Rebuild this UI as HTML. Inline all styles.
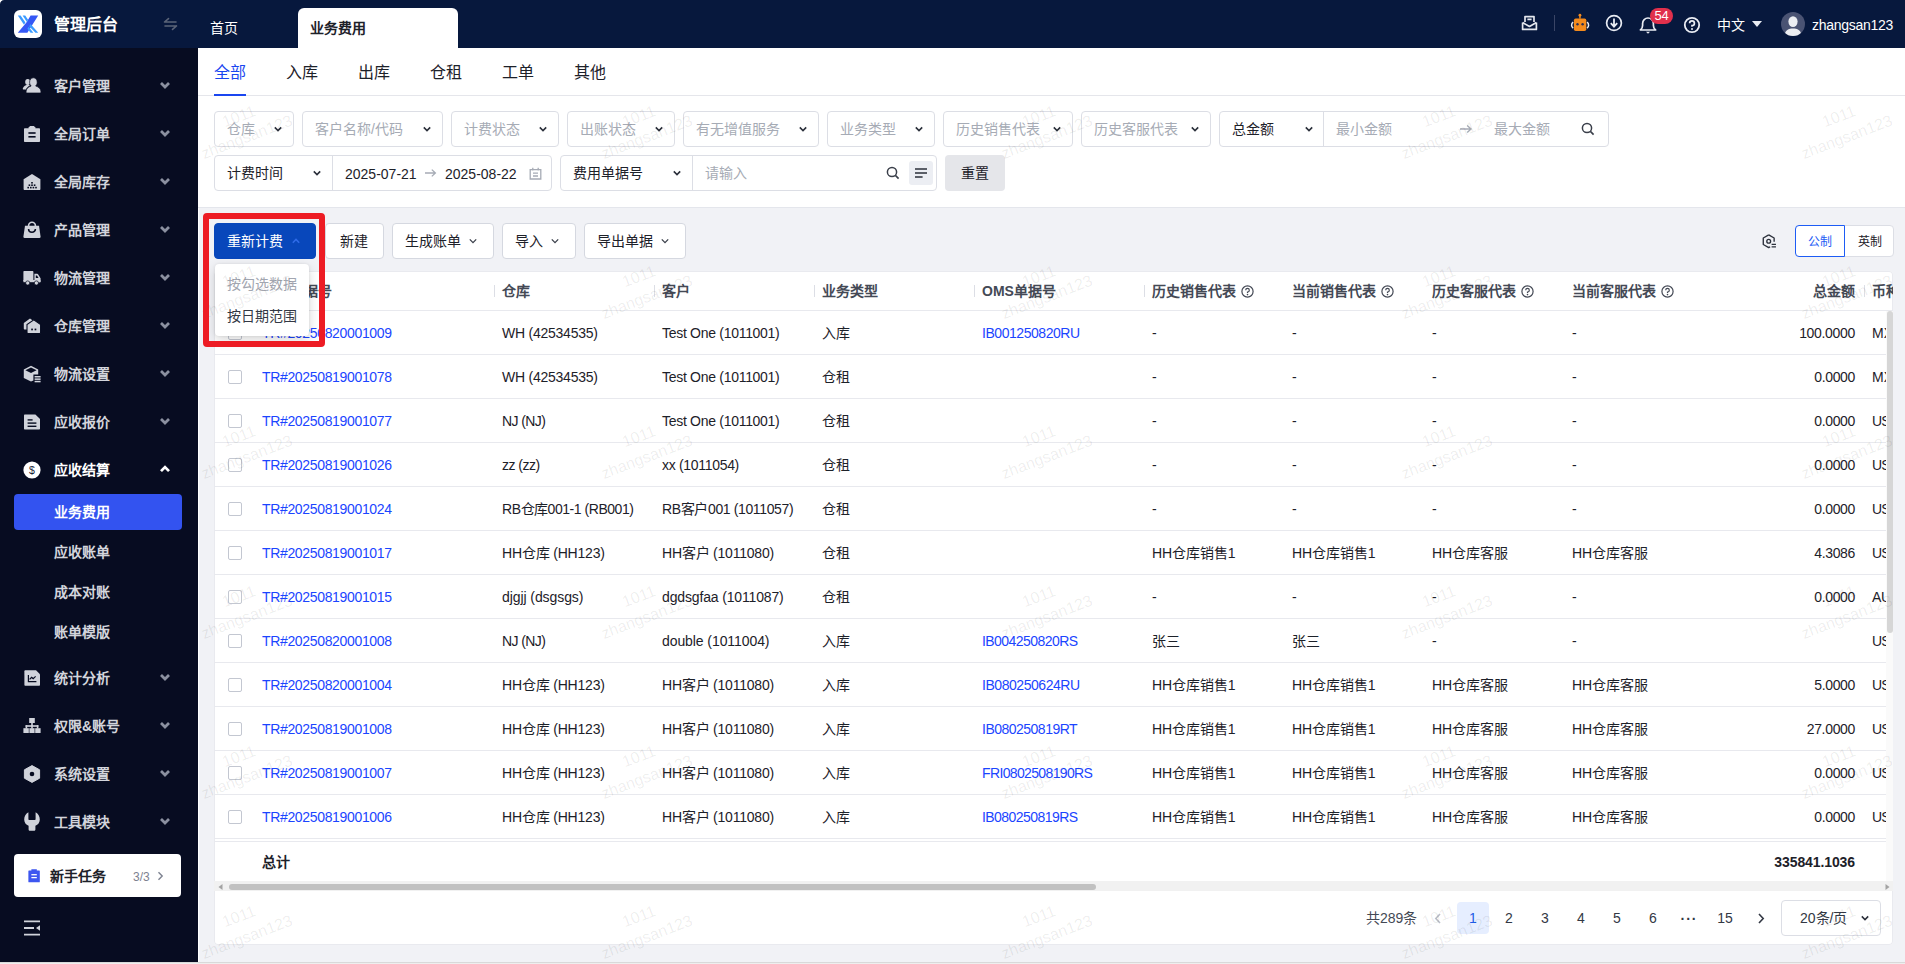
<!DOCTYPE html>
<html lang="zh-CN">
<head>
<meta charset="utf-8">
<title>业务费用</title>
<style>
*{box-sizing:border-box;margin:0;padding:0}
html,body{width:1905px;height:964px;overflow:hidden}
body{font-family:"Liberation Sans",sans-serif;font-size:14px;color:#1d2129;background:#f1f2f6;position:relative}
.abs{position:absolute}
svg{display:block}
#top{position:absolute;left:0;top:0;width:1905px;height:48px;background:#07183d}
#side{position:absolute;left:0;top:48px;width:198px;height:914px;background:#070c21}
#logo{position:absolute;left:14px;top:10px;width:28px;height:28px;border-radius:6px;background:#fff}
#brand{position:absolute;left:54px;top:13px;font-size:16px;font-weight:bold;color:#fff;line-height:24px;white-space:nowrap}
.t{position:absolute;white-space:nowrap;line-height:20px}
.mi{position:absolute;left:0;width:198px;height:40px}
.mi .ic{position:absolute;left:23px;top:12px;width:18px;height:18px;overflow:visible}
.mi .tx{position:absolute;left:54px;top:11px;line-height:20px;font-size:14px;font-weight:bold;color:#d3d5dc;white-space:nowrap}
.mi .cv{position:absolute;left:160px;top:15px;width:10px;height:10px}
.sub{position:absolute;left:54px;line-height:20px;font-size:14px;font-weight:bold;color:#d3d5dc;white-space:nowrap}
#subtabs{position:absolute;left:198px;top:48px;width:1707px;height:49px;background:#fff}
.st{position:absolute;top:14px;font-size:16px;line-height:22px;color:#1d2129;white-space:nowrap}
#filters{position:absolute;left:198px;top:97px;width:1707px;height:111px;background:#fff;border-bottom:1px solid #e4e6ec}
.sel{position:absolute;height:36px;border:1px solid #dcdee5;border-radius:4px;background:#fff}
.sel .ph{position:absolute;left:12px;top:7px;line-height:20px;color:#a6abb5;white-space:nowrap}
.sel .vl{position:absolute;left:12px;top:7px;line-height:20px;color:#1d2129;white-space:nowrap}
.sel .cv{position:absolute;right:11px;top:13px;width:8px;height:8px}
.btn{position:absolute;height:36px;border:1px solid #d5d8e0;border-radius:4px;background:#fff;top:223px;line-height:34px;white-space:nowrap;color:#1d2129;padding-left:12px}
.btn .cv{position:absolute;right:16px;top:13px;width:8px;height:8px}
#card{position:absolute;left:214px;top:271px;width:1679px;height:674px;background:#fff;border-radius:4px;overflow:hidden;box-shadow:inset 0 0 0 1px #e9eaef}
#card .h{position:absolute;top:10px;line-height:20px;font-weight:bold;color:#444955;white-space:nowrap}
#card .sp{position:absolute;top:14px;width:1px;height:12px;background:#dcdee5}
.r{position:absolute;left:0;width:1672px;height:44px;border-bottom:1px solid #e8e9ee;overflow:hidden}
.r div{position:absolute;top:12px;line-height:20px;white-space:nowrap;color:#1d2129}
.r .a{color:#1b45ff}
.r .cb{left:14px;top:15px;width:14px;height:14px;border:1px solid #c3c7d1;border-radius:2px;background:#fff}
.r .am{left:1441px;width:200px;text-align:right}
.w{position:absolute;width:120px;height:44px;line-height:22px;font-size:16px;text-align:center;color:rgba(0,0,0,.075);transform:rotate(-21deg);white-space:nowrap}
</style>
</head>
<body>
<div id="top">
<div id="logo"><svg width="28" height="28" viewBox="0 0 28 28"><path d="M3.8 22.8 L13.4 22.8 L24.2 5.6 L16.6 5.6 L12.6 12.2 Z" fill="#3558f5"/><path d="M3.8 5.6 L6.6 5.6 L11.4 12.6 L10 14.8 Z" fill="#3a9bff"/><path d="M8.6 5.6 L11.2 5.6 L14.2 10 L12.9 12 Z" fill="#3a9bff"/><path d="M15.2 16.2 L16.6 14 L24.2 22.8 L21.4 22.8 Z" fill="#3a9bff"/><path d="M13.4 18.8 L14.6 16.8 L19.4 22.8 L16.6 22.8 Z" fill="#3a9bff"/></svg></div>
<div id="brand">管理后台</div>
<svg class="abs" style="left:163px;top:17px" width="15" height="14" viewBox="0 0 15 14"><path d="M1.5 5 H13 M1.5 5 L5.5 1.6 M13.5 9 H2 M13.5 9 L9.5 12.4" fill="none" stroke="#5b6478" stroke-width="1.6" stroke-linecap="round"/></svg>
<div class="t" style="left:210px;top:18px;color:#fff">首页</div>
<div class="abs" style="left:298px;top:8px;width:160px;height:40px;background:#fff;border-radius:6px 6px 0 0"></div>
<div class="t" style="left:310px;top:18px;color:#1d2129;font-weight:bold">业务费用</div>
<svg class="abs" style="left:1521px;top:15px" width="17" height="16" viewBox="0 0 17 16"><path d="M4 7 V1.6 H13 V7 M1.6 7.4 V14.4 H15.4 V7.4 M1.6 7.6 L8.5 11.4 L15.4 7.6 M6.4 4.4 H10.6" fill="none" stroke="#e4e7ee" stroke-width="1.7" stroke-linejoin="round"/></svg>
<div class="abs" style="left:1554px;top:15px;width:1px;height:16px;background:#3a4566"></div>
<svg class="abs" style="left:1570px;top:13px" width="20" height="19" viewBox="0 0 20 19"><rect x="9.2" y="1.6" width="1.5" height="4" fill="#f38a1d"/><circle cx="9.95" cy="2.2" r="1.4" fill="#f38a1d"/><rect x="3.9" y="5.4" width="12.4" height="12.6" rx="1.8" fill="#f38a1d"/><path d="M3.2 9.2 A3.6 3.6 0 0 0 3.2 15.2 M17 9.2 A3.6 3.6 0 0 1 17 15.2" fill="none" stroke="#e9ecf3" stroke-width="1.5"/><circle cx="7.5" cy="11.2" r="1.2" fill="#2a2f55"/><circle cx="12.6" cy="11.2" r="1.2" fill="#2a2f55"/></svg>
<svg class="abs" style="left:1605px;top:14px" width="18" height="18" viewBox="0 0 18 18"><circle cx="9" cy="9" r="7.4" fill="none" stroke="#e9ecf3" stroke-width="1.7"/><path d="M9 4.6 V12 M5.8 9.2 L9 12.6 L12.2 9.2" fill="none" stroke="#e9ecf3" stroke-width="1.8"/></svg>
<svg class="abs" style="left:1638px;top:15px" width="20" height="20" viewBox="0 0 20 20"><path d="M2.4 15 H17.6 C16 13.6 15.4 12.4 15.4 10.4 V8.4 A5.4 5.4 0 0 0 4.6 8.4 V10.4 C4.6 12.4 4 13.6 2.4 15 Z" fill="none" stroke="#e9ecf3" stroke-width="1.7" stroke-linejoin="round"/><path d="M8 16.8 H12 L10 18.8 Z" fill="#e9ecf3"/></svg>
<div class="abs" style="left:1650px;top:8px;width:23px;height:16px;border-radius:8px;background:#e1304c;color:#fff;font-size:13px;line-height:16px;text-align:center;letter-spacing:-0.3px">54</div>
<svg class="abs" style="left:1683px;top:16px" width="18" height="18" viewBox="0 0 18 18"><circle cx="9" cy="9" r="7.2" fill="none" stroke="#e9ecf3" stroke-width="1.8"/><path d="M6.6 7.2 A2.4 2.4 0 1 1 9 9.6 V10.8" fill="none" stroke="#e9ecf3" stroke-width="1.7"/><circle cx="9" cy="13" r="1" fill="#e9ecf3"/></svg>
<div class="t" style="left:1717px;top:15px;color:#fff">中文</div>
<svg class="abs" style="left:1752px;top:21px" width="10" height="6" viewBox="0 0 10 6"><path d="M0 0 H10 L5 6 Z" fill="#e9ecf3"/></svg>
<div class="abs" style="left:1781px;top:12px;width:24px;height:24px;border-radius:12px;background:#4a5373;overflow:hidden"><svg width="24" height="24" viewBox="0 0 24 24"><ellipse cx="12" cy="9.6" rx="4.6" ry="5.4" fill="#eceef2"/><path d="M3.6 24 C3.6 17.6 8 16.4 12 16.4 C16 16.4 20.4 17.6 20.4 24 Z" fill="#eceef2"/></svg></div>
<div class="t" style="left:1812px;top:15px;color:#fff;letter-spacing:-0.27px;">zhangsan123</div>
</div>
<div id="side">
<div class="mi" style="top:17px"><svg class="ic" viewBox="0 0 18 18"><ellipse cx="4.7" cy="5" rx="2.5" ry="3" fill="#d0d3db"/><path d="M-0.2 11.4 C0.4 9.2 2.6 8 5.6 7.8 L7 8.6 C5 9.6 3.6 10.8 3 12.6 H0.6 C0 12.6 -0.4 12 -0.2 11.4 Z" fill="#d0d3db"/><path d="M10.4 0.8 C8 0.8 6.6 2.8 6.6 5.2 C6.6 6.8 7.2 8.2 8.2 9 C5.2 9.8 3 11.8 3 15 C3 15.6 3.4 16 4 16 H17 C17.6 16 18 15.6 18 15 C18 11.8 15.6 9.8 12.6 9 C13.6 8.2 14.2 6.8 14.2 5.2 C14.2 2.8 12.8 0.8 10.4 0.8 Z" fill="#d0d3db" stroke="#070c21" stroke-width=".7"/></svg><div class="tx" style="">客户管理</div><svg class="cv" viewBox="0 0 8 8"><path d="M0.8 2.4 L4 5.6 L7.2 2.4" fill="none" stroke="#8b90a0" stroke-width="2.2"/></svg></div>
<div class="mi" style="top:65px"><svg class="ic" viewBox="0 0 18 18"><path d="M2 3.2 H5.6 V2 H12.4 V3.2 H16 C16.6 3.2 17 3.6 17 4.2 V16 C17 16.6 16.6 17 16 17 H2 C1.4 17 1 16.6 1 16 V4.2 C1 3.6 1.4 3.2 2 3.2 Z" fill="#d0d3db"/><rect x="5.4" y="7.2" width="7.2" height="1.6" fill="#070c21"/><rect x="5.4" y="11" width="7.2" height="1.6" fill="#070c21"/><rect x="6.6" y="1" width="4.8" height="2.6" rx=".6" fill="#d0d3db"/></svg><div class="tx" style="">全局订单</div><svg class="cv" viewBox="0 0 8 8"><path d="M0.8 2.4 L4 5.6 L7.2 2.4" fill="none" stroke="#8b90a0" stroke-width="2.2"/></svg></div>
<div class="mi" style="top:113px"><svg class="ic" viewBox="0 0 18 18"><path d="M9 1 L17.4 6.2 V16 C17.4 16.6 17 17 16.4 17 H1.6 C1 17 0.6 16.6 0.6 16 V6.2 Z" fill="#d0d3db"/><g fill="#070c21"><rect x="8.2" y="9" width="1.6" height="1.6"/><rect x="5.6" y="11.4" width="1.6" height="1.6"/><rect x="8.2" y="11.4" width="1.6" height="1.6"/><rect x="10.8" y="11.4" width="1.6" height="1.6"/><rect x="4.4" y="13.8" width="1.6" height="1.6"/><rect x="7" y="13.8" width="1.6" height="1.6"/><rect x="9.6" y="13.8" width="1.6" height="1.6"/><rect x="12.2" y="13.8" width="1.6" height="1.6"/></g></svg><div class="tx" style="">全局库存</div><svg class="cv" viewBox="0 0 8 8"><path d="M0.8 2.4 L4 5.6 L7.2 2.4" fill="none" stroke="#8b90a0" stroke-width="2.2"/></svg></div>
<div class="mi" style="top:161px"><svg class="ic" viewBox="0 0 18 18"><path d="M5.6 6 V4.6 A3.4 3.4 0 0 1 12.4 4.6 V6" fill="none" stroke="#d0d3db" stroke-width="1.6"/><path d="M2 4.8 H16 L17.6 15.8 C17.7 16.5 17.2 17 16.6 17 H1.4 C0.8 17 0.3 16.5 0.4 15.8 Z" fill="#d0d3db"/><path d="M5.6 8 C5.6 12.4 12.4 12.4 12.4 8" fill="none" stroke="#070c21" stroke-width="1.6"/></svg><div class="tx" style="">产品管理</div><svg class="cv" viewBox="0 0 8 8"><path d="M0.8 2.4 L4 5.6 L7.2 2.4" fill="none" stroke="#8b90a0" stroke-width="2.2"/></svg></div>
<div class="mi" style="top:209px"><svg class="ic" viewBox="0 0 18 18"><path d="M1.2 2 H9.4 C10 2 10.4 2.4 10.4 3 V12 H0.4 V2.8 C0.4 2.4 0.8 2 1.2 2 Z" fill="#d0d3db"/><path d="M11.4 4.8 H14.2 C14.6 4.8 15 5 15.2 5.4 L17.4 9 C17.6 9.2 17.6 9.4 17.6 9.6 V12.6 C17.6 13 17.4 13.2 17 13.2 H11.4 Z" fill="#d0d3db"/><rect x="0.4" y="11" width="17" height="2.2" fill="#d0d3db"/><path d="M12.8 6.4 H14 L15.6 9 H12.8 Z" fill="#070c21"/><circle cx="4.7" cy="14" r="2.1" fill="#d0d3db" stroke="#070c21" stroke-width=".7"/><circle cx="13.4" cy="14" r="2.1" fill="#d0d3db" stroke="#070c21" stroke-width=".7"/></svg><div class="tx" style="">物流管理</div><svg class="cv" viewBox="0 0 8 8"><path d="M0.8 2.4 L4 5.6 L7.2 2.4" fill="none" stroke="#8b90a0" stroke-width="2.2"/></svg></div>
<div class="mi" style="top:257px"><svg class="ic" viewBox="0 0 18 18"><path d="M7 1.6 L13.2 6 V12.6 H1.8 C1.2 12.6 0.8 12.2 0.8 11.6 V6 Z" fill="#d0d3db"/><path d="M10.8 2.8 L17.6 7.6 V15.6 C17.6 16.2 17.2 16.6 16.6 16.6 H5 C4.4 16.6 4 16.2 4 15.6 V7.6 Z" fill="#d0d3db" stroke="#070c21" stroke-width="1.1"/><rect x="8.2" y="11.6" width="1.7" height="1.7" fill="#070c21"/><rect x="11.6" y="11.6" width="1.7" height="1.7" fill="#070c21"/></svg><div class="tx" style="">仓库管理</div><svg class="cv" viewBox="0 0 8 8"><path d="M0.8 2.4 L4 5.6 L7.2 2.4" fill="none" stroke="#8b90a0" stroke-width="2.2"/></svg></div>
<div class="mi" style="top:305px"><svg class="ic" viewBox="0 0 18 18"><path d="M8 0.8 L15.2 4.4 V9.6 H10.4 V15.4 L8 16.6 L0.8 13 V4.4 Z" fill="#d0d3db"/><path d="M2.4 5.2 L8 8 L13.6 5.2 L8 2.6 Z" fill="#070c21"/><rect x="11.6" y="11" width="6" height="1.5" fill="#d0d3db"/><rect x="11.6" y="13.4" width="6" height="1.5" fill="#d0d3db"/><rect x="11.6" y="15.8" width="6" height="1.5" fill="#d0d3db"/></svg><div class="tx" style="">物流设置</div><svg class="cv" viewBox="0 0 8 8"><path d="M0.8 2.4 L4 5.6 L7.2 2.4" fill="none" stroke="#8b90a0" stroke-width="2.2"/></svg></div>
<div class="mi" style="top:353px"><svg class="ic" viewBox="0 0 18 18"><path d="M2 1.4 H12.4 L17 6 V15.6 C17 16.2 16.6 16.6 16 16.6 H2 C1.4 16.6 1 16.2 1 15.6 V2.4 C1 1.8 1.4 1.4 2 1.4 Z" fill="#d0d3db"/><rect x="4.6" y="6.2" width="5" height="1.4" fill="#070c21"/><rect x="4.6" y="9.4" width="8.8" height="1.4" fill="#070c21"/><rect x="4.6" y="12.6" width="8.8" height="1.4" fill="#070c21"/></svg><div class="tx" style="">应收报价</div><svg class="cv" viewBox="0 0 8 8"><path d="M0.8 2.4 L4 5.6 L7.2 2.4" fill="none" stroke="#8b90a0" stroke-width="2.2"/></svg></div>
<div class="mi" style="top:401px"><svg class="ic" viewBox="0 0 18 18"><circle cx="9" cy="9" r="8.6" fill="#fff"/><text x="9" y="12.8" font-family="Liberation Sans,sans-serif" font-size="10.5" text-anchor="middle" fill="#1a1f3a">$</text></svg><div class="tx" style="color:#fff">应收结算</div><svg class="cv" viewBox="0 0 8 8"><path d="M0.8 5.7 L4 2.5 L7.2 5.7" fill="none" stroke="#fff" stroke-width="2.2"/></svg></div>
<div class="mi" style="top:609px"><svg class="ic" viewBox="0 0 18 18"><path d="M2.4 1.2 H13 L17 5.2 V15.8 C17 16.4 16.6 16.8 16 16.8 H2.4 C1.8 16.8 1.4 16.4 1.4 15.8 V2.2 C1.4 1.6 1.8 1.2 2.4 1.2 Z" fill="#d0d3db"/><path d="M5.4 6 V12.6 H13.4" fill="none" stroke="#070c21" stroke-width="1.2"/><path d="M6.6 10.4 L8.6 8.4 L10.2 9.6 L12.6 7.4" fill="none" stroke="#070c21" stroke-width="1.2"/></svg><div class="tx" style="">统计分析</div><svg class="cv" viewBox="0 0 8 8"><path d="M0.8 2.4 L4 5.6 L7.2 2.4" fill="none" stroke="#8b90a0" stroke-width="2.2"/></svg></div>
<div class="mi" style="top:657px"><svg class="ic" viewBox="0 0 18 18"><rect x="6.2" y="1" width="5.6" height="5" fill="#d0d3db"/><rect x="8.2" y="6" width="1.6" height="3" fill="#d0d3db"/><rect x="2.6" y="8.2" width="12.8" height="1.6" fill="#d0d3db"/><rect x="2.6" y="8.2" width="1.6" height="3.4" fill="#d0d3db"/><rect x="13.8" y="8.2" width="1.6" height="3.4" fill="#d0d3db"/><rect x="8.2" y="8.2" width="1.6" height="3.4" fill="#d0d3db"/><rect x="0.4" y="11.2" width="5.4" height="4.8" fill="#d0d3db"/><rect x="6.4" y="11.2" width="5.2" height="4.8" fill="#d0d3db"/><rect x="12.2" y="11.2" width="5.4" height="4.8" fill="#d0d3db"/></svg><div class="tx" style="">权限&amp;账号</div><svg class="cv" viewBox="0 0 8 8"><path d="M0.8 2.4 L4 5.6 L7.2 2.4" fill="none" stroke="#8b90a0" stroke-width="2.2"/></svg></div>
<div class="mi" style="top:705px"><svg class="ic" viewBox="0 0 18 18"><path d="M9 0.6 L16.6 4.8 V13.2 L9 17.4 L1.4 13.2 V4.8 Z" fill="#d0d3db" stroke="#d0d3db" stroke-width="1" stroke-linejoin="round"/><circle cx="9" cy="9" r="2.3" fill="#070c21"/></svg><div class="tx" style="">系统设置</div><svg class="cv" viewBox="0 0 8 8"><path d="M0.8 2.4 L4 5.6 L7.2 2.4" fill="none" stroke="#8b90a0" stroke-width="2.2"/></svg></div>
<div class="mi" style="top:753px"><svg class="ic" viewBox="0 0 18 18"><path d="M5.4 -0.8 C2.8 0.6 1.2 3.4 1.2 6.6 C1.2 9.6 3 12 5.6 12.8 V16.4 C5.6 17.2 6.2 17.8 7 17.8 H11 C11.8 17.8 12.4 17.2 12.4 16.4 V12.8 C15 12 16.8 9.6 16.8 6.6 C16.8 3.4 15.2 0.6 12.6 -0.8 V6 C12.6 6.6 12.2 7 11.6 7 H6.4 C5.8 7 5.4 6.6 5.4 6 Z" fill="#d0d3db"/></svg><div class="tx" style="">工具模块</div><svg class="cv" viewBox="0 0 8 8"><path d="M0.8 2.4 L4 5.6 L7.2 2.4" fill="none" stroke="#8b90a0" stroke-width="2.2"/></svg></div>
<div class="abs" style="left:14px;top:446px;width:168px;height:36px;border-radius:4px;background:#3353f0"></div>
<div class="sub" style="top:454px;color:#fff">业务费用</div>
<div class="sub" style="top:494px">应收账单</div>
<div class="sub" style="top:534px">成本对账</div>
<div class="sub" style="top:574px">账单模版</div>
<div class="abs" style="left:14px;top:806px;width:167px;height:43px;border-radius:4px;background:#fff"></div>
<svg class="abs" style="left:28px;top:821px" width="12.2" height="13.6" viewBox="0 0 13 15" preserveAspectRatio="none"><path d="M1 1.6 H3.6 V0.4 H9.4 V1.6 H12 C12.4 1.6 12.6 1.8 12.6 2.2 V14 C12.6 14.4 12.4 14.6 12 14.6 H1 C0.6 14.6 0.4 14.4 0.4 14 V2.2 C0.4 1.8 0.6 1.6 1 1.6 Z" fill="#3d56f0"/><rect x="3.6" y="5.6" width="5.8" height="1.4" fill="#fff"/><rect x="3.6" y="8.8" width="5.8" height="1.4" fill="#fff"/></svg>
<div class="t" style="left:50px;top:818px;font-weight:bold;color:#1d2129">新手任务</div>
<div class="t" style="left:133px;top:819px;font-size:12px;color:#7d8290">3/3</div>
<svg class="abs" style="left:157px;top:823px" width="7" height="10" viewBox="0 0 7 10"><path d="M1.5 1.2 L5.2 5 L1.5 8.8" fill="none" stroke="#7d8290" stroke-width="1.4"/></svg>
<svg class="abs" style="left:24px;top:872px" width="16" height="16" viewBox="0 0 16 16"><path d="M0 1.4 H16 M0 8 H10 M0 14.6 H16" stroke="#d0d3db" stroke-width="1.8" fill="none"/><path d="M16 5.2 V10.8 L12 8 Z" fill="#d0d3db"/></svg>
</div>
<div id="subtabs">
<div class="st" style="left:16px;color:#1a46f0;font-weight:500">全部</div><div class="st" style="left:88px">入库</div><div class="st" style="left:160px">出库</div><div class="st" style="left:232px">仓租</div><div class="st" style="left:304px">工单</div><div class="st" style="left:376px">其他</div>
<div class="abs" style="left:0;top:47px;width:1707px;height:1px;background:#e5e6eb"></div><div class="abs" style="left:16px;top:46px;width:32px;height:2px;background:#1a46f0"></div>
</div>
<div id="filters">
<div class="sel" style="left:16px;top:14px;width:80px"><div class="ph">仓库</div><svg class="cv" viewBox="0 0 8 8"><path d="M0.8 2.4 L4 5.6 L7.2 2.4" fill="none" stroke="#2b303b" stroke-width="1.6"/></svg></div>
<div class="sel" style="left:104px;top:14px;width:141px"><div class="ph">客户名称/代码</div><svg class="cv" viewBox="0 0 8 8"><path d="M0.8 2.4 L4 5.6 L7.2 2.4" fill="none" stroke="#2b303b" stroke-width="1.6"/></svg></div>
<div class="sel" style="left:253px;top:14px;width:108px"><div class="ph">计费状态</div><svg class="cv" viewBox="0 0 8 8"><path d="M0.8 2.4 L4 5.6 L7.2 2.4" fill="none" stroke="#2b303b" stroke-width="1.6"/></svg></div>
<div class="sel" style="left:369px;top:14px;width:108px"><div class="ph">出账状态</div><svg class="cv" viewBox="0 0 8 8"><path d="M0.8 2.4 L4 5.6 L7.2 2.4" fill="none" stroke="#2b303b" stroke-width="1.6"/></svg></div>
<div class="sel" style="left:485px;top:14px;width:136px"><div class="ph">有无增值服务</div><svg class="cv" viewBox="0 0 8 8"><path d="M0.8 2.4 L4 5.6 L7.2 2.4" fill="none" stroke="#2b303b" stroke-width="1.6"/></svg></div>
<div class="sel" style="left:629px;top:14px;width:108px"><div class="ph">业务类型</div><svg class="cv" viewBox="0 0 8 8"><path d="M0.8 2.4 L4 5.6 L7.2 2.4" fill="none" stroke="#2b303b" stroke-width="1.6"/></svg></div>
<div class="sel" style="left:745px;top:14px;width:130px"><div class="ph">历史销售代表</div><svg class="cv" viewBox="0 0 8 8"><path d="M0.8 2.4 L4 5.6 L7.2 2.4" fill="none" stroke="#2b303b" stroke-width="1.6"/></svg></div>
<div class="sel" style="left:883px;top:14px;width:130px"><div class="ph">历史客服代表</div><svg class="cv" viewBox="0 0 8 8"><path d="M0.8 2.4 L4 5.6 L7.2 2.4" fill="none" stroke="#2b303b" stroke-width="1.6"/></svg></div>
<div class="sel" style="left:1021px;top:14px;width:390px"></div>
<div class="abs" style="left:1125px;top:14px;width:1px;height:36px;background:#dcdee5"></div>
<div class="t" style="left:1034px;top:22px;color:#1d2129">总金额</div><svg class="abs" style="left:1107px;top:28px" width="8" height="8" viewBox="0 0 8 8"><path d="M0.8 2.4 L4 5.6 L7.2 2.4" fill="none" stroke="#2b303b" stroke-width="1.6"/></svg><div class="t" style="left:1138px;top:22px;color:#a6abb5">最小金额</div><svg class="abs" style="left:1261px;top:27px" width="14" height="10" viewBox="0 0 14 10"><path d="M1 5 H12 M8.2 1.4 L12 5 L8.2 8.6" fill="none" stroke="#a6abb5" stroke-width="1.4"/></svg><div class="t" style="left:1296px;top:22px;color:#a6abb5">最大金额</div><svg class="abs" style="left:1383px;top:25px" width="14" height="14" viewBox="0 0 14 14"><circle cx="6" cy="6" r="4.6" fill="none" stroke="#3a3f4a" stroke-width="1.5"/><path d="M9.4 9.4 L12.6 12.6" stroke="#3a3f4a" stroke-width="1.6"/></svg>
<div class="sel" style="left:16px;top:58px;width:338px"></div>
<div class="abs" style="left:134px;top:58px;width:1px;height:36px;background:#dcdee5"></div>
<div class="t" style="left:29px;top:66px;color:#1d2129">计费时间</div><svg class="abs" style="left:115px;top:72px" width="8" height="8" viewBox="0 0 8 8"><path d="M0.8 2.4 L4 5.6 L7.2 2.4" fill="none" stroke="#2b303b" stroke-width="1.6"/></svg><div class="t" style="left:147px;top:67px;color:#1d2129">2025-07-21</div><svg class="abs" style="left:226px;top:71px" width="13" height="10" viewBox="0 0 13 10"><path d="M1 5 H11.4 M7.8 1.6 L11.4 5 L7.8 8.4" fill="none" stroke="#a6abb5" stroke-width="1.3"/></svg><div class="t" style="left:247px;top:67px;color:#1d2129">2025-08-22</div><svg class="abs" style="left:331px;top:70px" width="13" height="13" viewBox="0 0 13 13"><path d="M1.2 2.6 H11.8 V12 H1.2 Z M3.8 0.8 V3.6 M9.2 0.8 V3.6 M4 6.2 H9 M4 9 H9" fill="none" stroke="#a6abb5" stroke-width="1.3"/></svg>
<div class="sel" style="left:362px;top:58px;width:377px"></div>
<div class="abs" style="left:494px;top:58px;width:1px;height:36px;background:#dcdee5"></div>
<div class="t" style="left:375px;top:66px;color:#1d2129">费用单据号</div><svg class="abs" style="left:475px;top:72px" width="8" height="8" viewBox="0 0 8 8"><path d="M0.8 2.4 L4 5.6 L7.2 2.4" fill="none" stroke="#2b303b" stroke-width="1.6"/></svg><div class="t" style="left:507px;top:66px;color:#a6abb5">请输入</div><svg class="abs" style="left:688px;top:69px" width="14" height="14" viewBox="0 0 14 14"><circle cx="6" cy="6" r="4.6" fill="none" stroke="#3a3f4a" stroke-width="1.5"/><path d="M9.4 9.4 L12.6 12.6" stroke="#3a3f4a" stroke-width="1.6"/></svg><div class="abs" style="left:711px;top:64px;width:24px;height:24px;border-radius:3px;background:#eceef3"></div><svg class="abs" style="left:717px;top:71px" width="12" height="10" viewBox="0 0 12 10"><path d="M0 1 H12 M0 5 H12 M0 9 H7.6" stroke="#2b303b" stroke-width="1.6" fill="none"/></svg>
<div class="abs" style="left:747px;top:58px;width:60px;height:36px;border-radius:4px;background:#e5e6ea;text-align:center;line-height:36px;color:#1d2129">重置</div>
</div>
<div id="card">
<div class="h" style="left:48px">费用单据号</div><div class="h" style="left:288px">仓库</div><div class="h" style="left:448px">客户</div><div class="h" style="left:608px">业务类型</div><div class="h" style="left:768px">OMS单据号</div><div class="h" style="left:938px">历史销售代表<svg style="display:inline-block;vertical-align:-2px;margin-left:5px" width="13" height="13" viewBox="0 0 13 13"><circle cx="6.5" cy="6.5" r="5.6" fill="none" stroke="#444955" stroke-width="1.2"/><path d="M4.7 5.2 A1.8 1.8 0 1 1 6.5 7 V8" fill="none" stroke="#444955" stroke-width="1.2"/><circle cx="6.5" cy="9.6" r=".8" fill="#444955"/></svg></div><div class="h" style="left:1078px">当前销售代表<svg style="display:inline-block;vertical-align:-2px;margin-left:5px" width="13" height="13" viewBox="0 0 13 13"><circle cx="6.5" cy="6.5" r="5.6" fill="none" stroke="#444955" stroke-width="1.2"/><path d="M4.7 5.2 A1.8 1.8 0 1 1 6.5 7 V8" fill="none" stroke="#444955" stroke-width="1.2"/><circle cx="6.5" cy="9.6" r=".8" fill="#444955"/></svg></div><div class="h" style="left:1218px">历史客服代表<svg style="display:inline-block;vertical-align:-2px;margin-left:5px" width="13" height="13" viewBox="0 0 13 13"><circle cx="6.5" cy="6.5" r="5.6" fill="none" stroke="#444955" stroke-width="1.2"/><path d="M4.7 5.2 A1.8 1.8 0 1 1 6.5 7 V8" fill="none" stroke="#444955" stroke-width="1.2"/><circle cx="6.5" cy="9.6" r=".8" fill="#444955"/></svg></div><div class="h" style="left:1358px">当前客服代表<svg style="display:inline-block;vertical-align:-2px;margin-left:5px" width="13" height="13" viewBox="0 0 13 13"><circle cx="6.5" cy="6.5" r="5.6" fill="none" stroke="#444955" stroke-width="1.2"/><path d="M4.7 5.2 A1.8 1.8 0 1 1 6.5 7 V8" fill="none" stroke="#444955" stroke-width="1.2"/><circle cx="6.5" cy="9.6" r=".8" fill="#444955"/></svg></div><div class="h" style="left:1658px">币种</div><div class="h" style="left:1441px;width:200px;text-align:right">总金额</div>
<div class="sp" style="left:280px"></div><div class="sp" style="left:440px"></div><div class="sp" style="left:600px"></div><div class="sp" style="left:760px"></div><div class="sp" style="left:930px"></div><div class="sp" style="left:1650px"></div>
<div class="abs" style="left:0;top:39px;width:1679px;height:1px;background:#e8e9ee"></div>
<div class="r" style="top:40px"><div class="cb"></div><div class="a" style="left:48px;letter-spacing:-0.34px;">TR#20250820001009</div><div style="left:288px;letter-spacing:-0.24px;">WH (42534535)</div><div style="left:448px;letter-spacing:-0.29px;">Test One (1011001)</div><div style="left:608px;">入库</div><div class="a" style="left:768px;letter-spacing:-0.45px;">IB001250820RU</div><div style="left:938px;letter-spacing:0.94px;">-</div><div style="left:1078px;letter-spacing:0.94px;">-</div><div style="left:1218px;letter-spacing:0.94px;">-</div><div style="left:1358px;letter-spacing:0.94px;">-</div><div class="am" style="letter-spacing:-0.32px;">100.0000</div><div style="left:1658px;">MXN</div></div>
<div class="r" style="top:84px"><div class="cb"></div><div class="a" style="left:48px;letter-spacing:-0.34px;">TR#20250819001078</div><div style="left:288px;letter-spacing:-0.24px;">WH (42534535)</div><div style="left:448px;letter-spacing:-0.29px;">Test One (1011001)</div><div style="left:608px;">仓租</div><div style="left:938px;letter-spacing:0.94px;">-</div><div style="left:1078px;letter-spacing:0.94px;">-</div><div style="left:1218px;letter-spacing:0.94px;">-</div><div style="left:1358px;letter-spacing:0.94px;">-</div><div class="am" style="letter-spacing:-0.34px;">0.0000</div><div style="left:1658px;">MXN</div></div>
<div class="r" style="top:128px"><div class="cb"></div><div class="a" style="left:48px;letter-spacing:-0.34px;">TR#20250819001077</div><div style="left:288px;letter-spacing:-0.6px;">NJ (NJ)</div><div style="left:448px;letter-spacing:-0.29px;">Test One (1011001)</div><div style="left:608px;">仓租</div><div style="left:938px;letter-spacing:0.94px;">-</div><div style="left:1078px;letter-spacing:0.94px;">-</div><div style="left:1218px;letter-spacing:0.94px;">-</div><div style="left:1358px;letter-spacing:0.94px;">-</div><div class="am" style="letter-spacing:-0.34px;">0.0000</div><div style="left:1658px;letter-spacing:-0.9px;">USD</div></div>
<div class="r" style="top:172px"><div class="cb"></div><div class="a" style="left:48px;letter-spacing:-0.34px;">TR#20250819001026</div><div style="left:288px;letter-spacing:-0.51px;">zz (zz)</div><div style="left:448px;letter-spacing:-0.31px;">xx (1011054)</div><div style="left:608px;">仓租</div><div style="left:938px;letter-spacing:0.94px;">-</div><div style="left:1078px;letter-spacing:0.94px;">-</div><div style="left:1218px;letter-spacing:0.94px;">-</div><div style="left:1358px;letter-spacing:0.94px;">-</div><div class="am" style="letter-spacing:-0.34px;">0.0000</div><div style="left:1658px;letter-spacing:-0.9px;">USD</div></div>
<div class="r" style="top:216px"><div class="cb"></div><div class="a" style="left:48px;letter-spacing:-0.34px;">TR#20250819001024</div><div style="left:288px;letter-spacing:-0.46px;">RB仓库001-1 (RB001)</div><div style="left:448px;letter-spacing:-0.37px;">RB客户001 (1011057)</div><div style="left:608px;">仓租</div><div style="left:938px;letter-spacing:0.94px;">-</div><div style="left:1078px;letter-spacing:0.94px;">-</div><div style="left:1218px;letter-spacing:0.94px;">-</div><div style="left:1358px;letter-spacing:0.94px;">-</div><div class="am" style="letter-spacing:-0.34px;">0.0000</div><div style="left:1658px;letter-spacing:-0.9px;">USD</div></div>
<div class="r" style="top:260px"><div class="cb"></div><div class="a" style="left:48px;letter-spacing:-0.34px;">TR#20250819001017</div><div style="left:288px;letter-spacing:-0.19px;">HH仓库 (HH123)</div><div style="left:448px;letter-spacing:-0.21px;">HH客户 (1011080)</div><div style="left:608px;">仓租</div><div style="left:938px;letter-spacing:-0.08px;">HH仓库销售1</div><div style="left:1078px;letter-spacing:-0.08px;">HH仓库销售1</div><div style="left:1218px;letter-spacing:-0.06px;">HH仓库客服</div><div style="left:1358px;letter-spacing:-0.06px;">HH仓库客服</div><div class="am" style="letter-spacing:-0.34px;">4.3086</div><div style="left:1658px;letter-spacing:-0.9px;">USD</div></div>
<div class="r" style="top:304px"><div class="cb"></div><div class="a" style="left:48px;letter-spacing:-0.34px;">TR#20250819001015</div><div style="left:288px;letter-spacing:-0.08px;">djgjj (dsgsgs)</div><div style="left:448px;letter-spacing:-0.15px;">dgdsgfaa (1011087)</div><div style="left:608px;">仓租</div><div style="left:938px;letter-spacing:0.94px;">-</div><div style="left:1078px;letter-spacing:0.94px;">-</div><div style="left:1218px;letter-spacing:0.94px;">-</div><div style="left:1358px;letter-spacing:0.94px;">-</div><div class="am" style="letter-spacing:-0.34px;">0.0000</div><div style="left:1658px;letter-spacing:-0.36px;">AUD</div></div>
<div class="r" style="top:348px"><div class="cb"></div><div class="a" style="left:48px;letter-spacing:-0.34px;">TR#20250820001008</div><div style="left:288px;letter-spacing:-0.6px;">NJ (NJ)</div><div style="left:448px;letter-spacing:-0.08px;">double (1011004)</div><div style="left:608px;">入库</div><div class="a" style="left:768px;letter-spacing:-0.56px;">IB004250820RS</div><div style="left:938px;">张三</div><div style="left:1078px;">张三</div><div style="left:1218px;letter-spacing:0.94px;">-</div><div style="left:1358px;letter-spacing:0.94px;">-</div><div style="left:1658px;letter-spacing:-0.9px;">USD</div></div>
<div class="r" style="top:392px"><div class="cb"></div><div class="a" style="left:48px;letter-spacing:-0.34px;">TR#20250820001004</div><div style="left:288px;letter-spacing:-0.19px;">HH仓库 (HH123)</div><div style="left:448px;letter-spacing:-0.21px;">HH客户 (1011080)</div><div style="left:608px;">入库</div><div class="a" style="left:768px;letter-spacing:-0.45px;">IB080250624RU</div><div style="left:938px;letter-spacing:-0.08px;">HH仓库销售1</div><div style="left:1078px;letter-spacing:-0.08px;">HH仓库销售1</div><div style="left:1218px;letter-spacing:-0.06px;">HH仓库客服</div><div style="left:1358px;letter-spacing:-0.06px;">HH仓库客服</div><div class="am" style="letter-spacing:-0.34px;">5.0000</div><div style="left:1658px;letter-spacing:-0.9px;">USD</div></div>
<div class="r" style="top:436px"><div class="cb"></div><div class="a" style="left:48px;letter-spacing:-0.34px;">TR#20250819001008</div><div style="left:288px;letter-spacing:-0.19px;">HH仓库 (HH123)</div><div style="left:448px;letter-spacing:-0.21px;">HH客户 (1011080)</div><div style="left:608px;">入库</div><div class="a" style="left:768px;letter-spacing:-0.51px;">IB080250819RT</div><div style="left:938px;letter-spacing:-0.08px;">HH仓库销售1</div><div style="left:1078px;letter-spacing:-0.08px;">HH仓库销售1</div><div style="left:1218px;letter-spacing:-0.06px;">HH仓库客服</div><div style="left:1358px;letter-spacing:-0.06px;">HH仓库客服</div><div class="am" style="letter-spacing:-0.33px;">27.0000</div><div style="left:1658px;letter-spacing:-0.9px;">USD</div></div>
<div class="r" style="top:480px"><div class="cb"></div><div class="a" style="left:48px;letter-spacing:-0.34px;">TR#20250819001007</div><div style="left:288px;letter-spacing:-0.19px;">HH仓库 (HH123)</div><div style="left:448px;letter-spacing:-0.21px;">HH客户 (1011080)</div><div style="left:608px;">入库</div><div class="a" style="left:768px;letter-spacing:-0.64px;">FRI0802508190RS</div><div style="left:938px;letter-spacing:-0.08px;">HH仓库销售1</div><div style="left:1078px;letter-spacing:-0.08px;">HH仓库销售1</div><div style="left:1218px;letter-spacing:-0.06px;">HH仓库客服</div><div style="left:1358px;letter-spacing:-0.06px;">HH仓库客服</div><div class="am" style="letter-spacing:-0.34px;">0.0000</div><div style="left:1658px;letter-spacing:-0.9px;">USD</div></div>
<div class="r" style="top:524px"><div class="cb"></div><div class="a" style="left:48px;letter-spacing:-0.34px;">TR#20250819001006</div><div style="left:288px;letter-spacing:-0.19px;">HH仓库 (HH123)</div><div style="left:448px;letter-spacing:-0.21px;">HH客户 (1011080)</div><div style="left:608px;">入库</div><div class="a" style="left:768px;letter-spacing:-0.56px;">IB080250819RS</div><div style="left:938px;letter-spacing:-0.08px;">HH仓库销售1</div><div style="left:1078px;letter-spacing:-0.08px;">HH仓库销售1</div><div style="left:1218px;letter-spacing:-0.06px;">HH仓库客服</div><div style="left:1358px;letter-spacing:-0.06px;">HH仓库客服</div><div class="am" style="letter-spacing:-0.34px;">0.0000</div><div style="left:1658px;letter-spacing:-0.9px;">USD</div></div>
<div class="abs" style="left:0;top:570px;width:1679px;height:1px;background:#e8e9ee"></div>
<div class="t" style="left:48px;top:581px;font-weight:bold;color:#1d2129">总计</div>
<div class="t" style="left:1441px;top:581px;width:200px;text-align:right;font-weight:bold;color:#1d2129;letter-spacing:-0.1px">335841.1036</div>
<div class="abs" style="left:0;top:610px;width:1679px;height:10px;background:#f1f1f1"></div>
<div class="abs" style="left:15px;top:613px;width:867px;height:6px;background:#c1c1c1;border-radius:3px"></div>
<svg class="abs" style="left:4px;top:613px" width="5" height="6" viewBox="0 0 5 6"><path d="M4.5 0 V6 L0.5 3 Z" fill="#a3a3a3"/></svg>
<svg class="abs" style="left:1671px;top:613px" width="5" height="6" viewBox="0 0 5 6"><path d="M0.5 0 V6 L4.5 3 Z" fill="#a3a3a3"/></svg>
<div class="abs" style="left:1672px;top:40px;width:7px;height:570px;background:#fafafa"></div>
<div class="abs" style="left:1672.6px;top:40px;width:6px;height:322px;background:#d6d6d6;border-radius:3px"></div>
<div class="t" style="left:1152px;top:637px;color:#444955">共289条</div><svg class="abs" style="left:1220px;top:642px" width="8" height="11" viewBox="0 0 8 11"><path d="M6 1 L1.8 5.5 L6 10" fill="none" stroke="#b9bdc7" stroke-width="1.6"/></svg><div class="abs" style="left:1243px;top:631px;width:32px;height:32px;border-radius:4px;background:#e6eeff"></div><div class="t" style="left:1239px;top:637px;width:40px;text-align:center;color:#1e5be6">1</div><div class="t" style="left:1275px;top:637px;width:40px;text-align:center;color:#333844">2</div><div class="t" style="left:1311px;top:637px;width:40px;text-align:center;color:#333844">3</div><div class="t" style="left:1347px;top:637px;width:40px;text-align:center;color:#333844">4</div><div class="t" style="left:1383px;top:637px;width:40px;text-align:center;color:#333844">5</div><div class="t" style="left:1419px;top:637px;width:40px;text-align:center;color:#333844">6</div><div class="t" style="left:1491px;top:637px;width:40px;text-align:center;color:#333844">15</div><div class="t" style="left:1455px;top:638px;width:40px;text-align:center;color:#333844;font-weight:bold;letter-spacing:1px">···</div><svg class="abs" style="left:1543px;top:642px" width="8" height="11" viewBox="0 0 8 11"><path d="M2 1 L6.2 5.5 L2 10" fill="none" stroke="#333844" stroke-width="1.6"/></svg><div class="sel" style="left:1567px;top:629px;width:100px;height:36px"><div class="vl" style="left:18px;top:7px;color:#333844">20条/页</div><svg class="cv" viewBox="0 0 8 8"><path d="M0.8 2.4 L4 5.6 L7.2 2.4" fill="none" stroke="#2b303b" stroke-width="1.5"/></svg></div>
</div>
<div id="toolbar">
<div class="btn" style="left:214px;width:102px;background:#0847bb;border-color:#0847bb;color:#fff">重新计费<svg class="abs" style="left:77px;top:13px" width="8" height="8" viewBox="0 0 8 8"><path d="M0.8 5.7 L4 2.5 L7.2 5.7" fill="none" stroke="#2f6be8" stroke-width="1.6"/></svg></div>
<div class="btn" style="left:325px;width:59px;padding-left:14px">新建</div>
<div class="btn" style="left:392px;width:102px">生成账单<svg class="cv" viewBox="0 0 8 8"><path d="M0.8 2.4 L4 5.6 L7.2 2.4" fill="none" stroke="#3a3f4a" stroke-width="1.3"/></svg></div>
<div class="btn" style="left:502px;width:74px">导入<svg class="cv" viewBox="0 0 8 8"><path d="M0.8 2.4 L4 5.6 L7.2 2.4" fill="none" stroke="#3a3f4a" stroke-width="1.3"/></svg></div>
<div class="btn" style="left:584px;width:102px">导出单据<svg class="cv" viewBox="0 0 8 8"><path d="M0.8 2.4 L4 5.6 L7.2 2.4" fill="none" stroke="#3a3f4a" stroke-width="1.3"/></svg></div>
<svg class="abs" style="left:1762px;top:234px" width="14.5" height="15.4" viewBox="0 0 16 17"><path d="M7.4 1 L13.4 4.4 V8.6 M7.4 1 L1.4 4.4 V11.6 L7.4 15 L9 14.1" fill="none" stroke="#2b303b" stroke-width="1.5" stroke-linejoin="round"/><circle cx="7.4" cy="8" r="2.1" fill="none" stroke="#2b303b" stroke-width="1.5"/><path d="M10.6 11.4 H15.4 M10.6 14.2 H15.4" stroke="#2b303b" stroke-width="1.5"/></svg>
<div class="abs" style="left:1795px;top:225px;width:99px;height:32px;border:1px solid #dcdee5;border-radius:4px;background:#fff"></div>
<div class="abs" style="left:1795px;top:225px;width:50px;height:32px;border:1px solid #1d5cf5;border-radius:4px 0 0 4px;background:#fff;color:#1d5cf5;font-size:12px;line-height:33px;text-align:center">公制</div>
<div class="abs" style="left:1845px;top:225px;width:49px;height:32px;color:#1d2129;font-size:12px;line-height:35px;text-align:center">英制</div>
</div>
<div id="dd" class="abs" style="left:215px;top:264px;width:94px;height:72px;background:#fff;border-radius:4px;box-shadow:0 4px 12px rgba(0,0,0,.16),0 0 3px rgba(0,0,0,.08)">
<div class="t" style="left:12px;top:10px;color:#a2a6b0">按勾选数据</div>
<div class="t" style="left:12px;top:42px;color:#333844">按日期范围</div>
</div>
<div id="wm" class="abs" style="left:198px;top:48px;width:1707px;height:914px;overflow:hidden;pointer-events:none">
<div class="w" style="left:-15px;top:57px">1011<br>zhangsan123</div><div class="w" style="left:385px;top:57px">1011<br>zhangsan123</div><div class="w" style="left:785px;top:57px">1011<br>zhangsan123</div><div class="w" style="left:1185px;top:57px">1011<br>zhangsan123</div><div class="w" style="left:1585px;top:57px">1011<br>zhangsan123</div><div class="w" style="left:-15px;top:217px">1011<br>zhangsan123</div><div class="w" style="left:385px;top:217px">1011<br>zhangsan123</div><div class="w" style="left:785px;top:217px">1011<br>zhangsan123</div><div class="w" style="left:1185px;top:217px">1011<br>zhangsan123</div><div class="w" style="left:1585px;top:217px">1011<br>zhangsan123</div><div class="w" style="left:-15px;top:377px">1011<br>zhangsan123</div><div class="w" style="left:385px;top:377px">1011<br>zhangsan123</div><div class="w" style="left:785px;top:377px">1011<br>zhangsan123</div><div class="w" style="left:1185px;top:377px">1011<br>zhangsan123</div><div class="w" style="left:1585px;top:377px">1011<br>zhangsan123</div><div class="w" style="left:-15px;top:537px">1011<br>zhangsan123</div><div class="w" style="left:385px;top:537px">1011<br>zhangsan123</div><div class="w" style="left:785px;top:537px">1011<br>zhangsan123</div><div class="w" style="left:1185px;top:537px">1011<br>zhangsan123</div><div class="w" style="left:1585px;top:537px">1011<br>zhangsan123</div><div class="w" style="left:-15px;top:697px">1011<br>zhangsan123</div><div class="w" style="left:385px;top:697px">1011<br>zhangsan123</div><div class="w" style="left:785px;top:697px">1011<br>zhangsan123</div><div class="w" style="left:1185px;top:697px">1011<br>zhangsan123</div><div class="w" style="left:1585px;top:697px">1011<br>zhangsan123</div><div class="w" style="left:-15px;top:857px">1011<br>zhangsan123</div><div class="w" style="left:385px;top:857px">1011<br>zhangsan123</div><div class="w" style="left:785px;top:857px">1011<br>zhangsan123</div><div class="w" style="left:1185px;top:857px">1011<br>zhangsan123</div><div class="w" style="left:1585px;top:857px">1011<br>zhangsan123</div>
</div>
<div id="red" class="abs" style="left:203px;top:213px;width:122px;height:134px;border:6px solid #ed1c24;border-radius:4px"></div>
<div class="abs" style="left:198px;top:208px;width:1px;height:754px;background:#fff"></div>
<div class="abs" style="left:0;top:962px;width:1905px;height:1px;background:#d9d9d9"></div>
<div class="abs" style="left:0;top:963px;width:1905px;height:1px;background:#eee"></div>
<svg class="abs" style="left:0;top:0" width="5" height="5" viewBox="0 0 5 5"><path d="M0 0 H4.2 A4.2 4.2 0 0 0 0 4.2 Z" fill="#fff"/></svg>
</body>
</html>
